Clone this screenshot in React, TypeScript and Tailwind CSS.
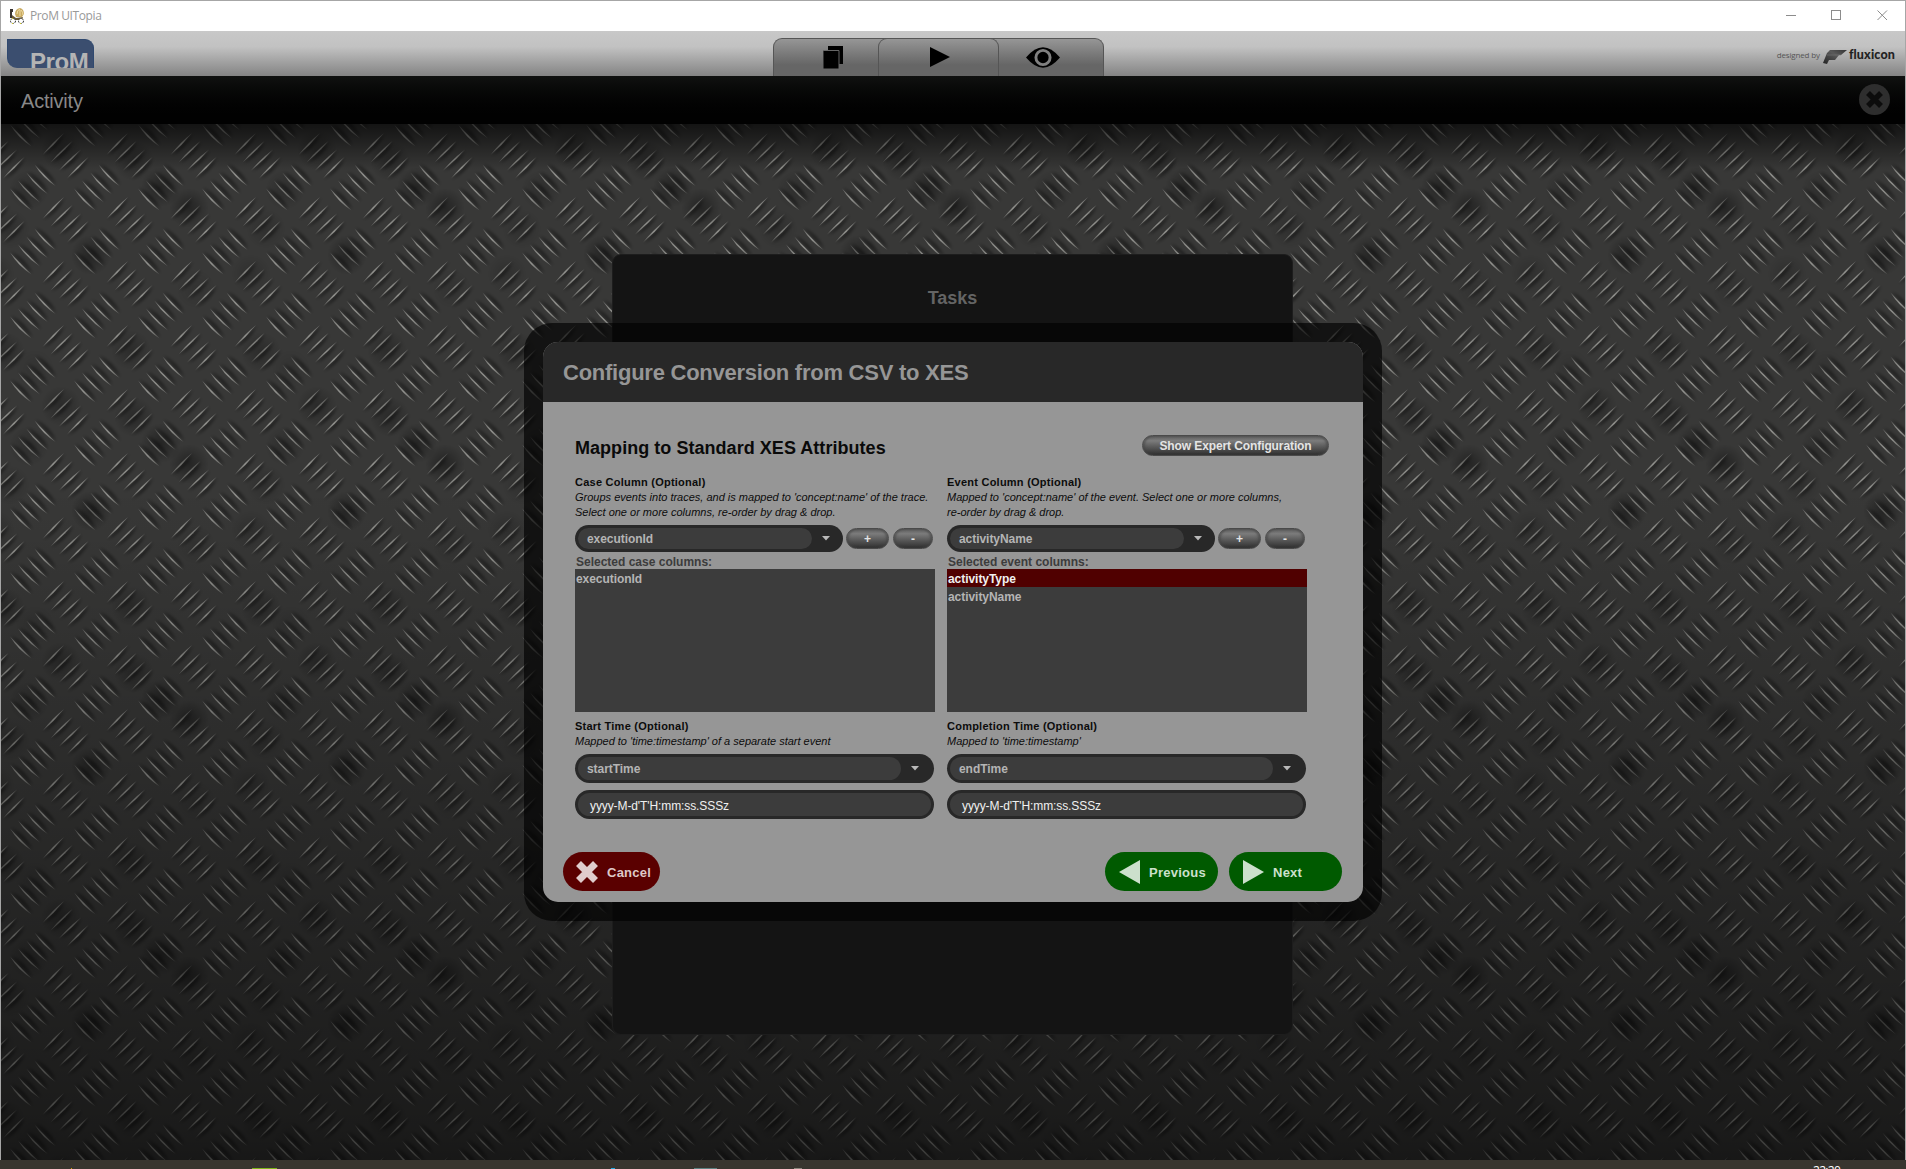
import React from "react";

const FONT = "font-['Liberation_Sans',Arial,sans-serif]";

/* Raised strokes of the tread plate, one 64px cell. */
const SLASHES = [
  [41.5, 31, 63, 9],
  [49.5, 38.5, 71.5, 17],
  [58, 46.5, 80, 25.5],
  [66, 54.5, 87.5, 33],
];
const BACKSLASHES = [
  [9, 64.5, 30.5, 86.5],
  [17, 56.5, 39, 78.5],
  [25.3, 48.5, 46.7, 70],
  [33.5, 40.5, 54.5, 62],
];
const OFFSETS = [-64, 0];
const OFFSETS_Y = [-64, 0, 64];

const GRIME = [
  [60, 26, 0.24], [133, 37, 0.25], [160, 63, 0.34], [188, 84, 0.34], [90, 131, 0.34], [9, 105, 0.15],
  [130, 226, 0.22], [28, 66, 0.18], [4, 228, 0.22], [34, 245, 0.1], [250, 150, 0.15], [195, 165, 0.1],
];
const WRAP = [-256, 0, 256];

function lens(x1: number, y1: number, x2: number, y2: number, bulge: number, inner: number) {
  const mx = (x1 + x2) / 2;
  const my = (y1 + y2) / 2;
  const sx = y2 > y1 ? -1 : 1;
  return `M${x1} ${y1}Q${mx + sx * bulge} ${my + bulge} ${x2} ${y2}Q${mx + sx * inner} ${my + inner} ${x1} ${y1}Z`;
}

function TreadPlate() {
  return (
    <svg className="absolute inset-0 h-full w-full" aria-hidden="true">
      <defs>
        <filter id="soft" x="-50%" y="-50%" width="200%" height="200%">
          <feGaussianBlur stdDeviation="1.8" />
        </filter>
        <radialGradient id="grime">
          <stop offset="0" stopColor="#000" />
          <stop offset="0.4" stopColor="#000" stopOpacity="0.65" />
          <stop offset="1" stopColor="#000" stopOpacity="0" />
        </radialGradient>
        <linearGradient id="edge" x1="0" y1="0" x2="0" y2="1">
          <stop offset="0" stopColor="#8a8a87" stopOpacity="0.65" />
          <stop offset="0.5" stopColor="#90908c" />
          <stop offset="1" stopColor="#777774" stopOpacity="0.7" />
        </linearGradient>
        <pattern id="cell" width="64" height="64" patternUnits="userSpaceOnUse">
          {OFFSETS.map((ox) =>
            OFFSETS_Y.map((oy) => (
              <g key={`${ox}:${oy}`} transform={`translate(${ox} ${oy})`}>
                {SLASHES.map(([a, b, c, d]) => (
                  <g key={a}>
                    <path d={lens(a + 1, b + 1, c + 1, d + 1, 3.5, -0.5)} fill="#0a0a0a" fillOpacity="0.48" filter="url(#soft)" />
                    <path d={lens(a, b, c, d, 1.1, -1.3)} fill="url(#edge)" />
                  </g>
                ))}
                {BACKSLASHES.map(([a, b, c, d]) => (
                  <g key={a}>
                    <path d={lens(a + 1, b - 1, c + 1, d - 1, -4, 0.5)} fill="#0a0a0a" fillOpacity="0.45" filter="url(#soft)" />
                    <path d={lens(a, b, c, d, 2.5, 0.2)} fill="url(#edge)" />
                  </g>
                ))}
              </g>
            )),
          )}
        </pattern>
        <pattern id="dirt" width="256" height="256" patternUnits="userSpaceOnUse">
          {WRAP.map((ox) =>
            WRAP.map((oy) =>
              GRIME.map(([x, y, o]) => (
                <circle key={`${ox}:${oy}:${x}`} cx={x + ox} cy={y + oy} r="20" fill="url(#grime)" opacity={o} />
              )),
            ),
          )}
        </pattern>
        <linearGradient id="light" x1="0" y1="0" x2="0" y2="1">
          <stop offset="0" stopColor="#000" stopOpacity="0.65" />
          <stop offset="0.045" stopColor="#000" stopOpacity="0" />
          <stop offset="0.35" stopColor="#000" stopOpacity="0" />
          <stop offset="0.97" stopColor="#000" stopOpacity="0.52" />
          <stop offset="1" stopColor="#000" stopOpacity="0.58" />
        </linearGradient>
      </defs>
      <rect width="100%" height="100%" fill="#383837" />
      <rect width="100%" height="100%" fill="url(#cell)" />
      <rect width="100%" height="100%" fill="url(#dirt)" />
      <rect width="100%" height="100%" fill="url(#light)" />
    </svg>
  );
}

function AppIcon() {
  return (
    <svg width="16" height="17" viewBox="0 0 16 17">
      <path d="M1 1h3v3h-1v6h-2z" fill="#3a3430" />
      <path d="M3 7l4 3 7-1-1 3H3z" fill="#6b5a35" />
      <path d="M6 6q0-5 5-6 4 1 4 6l-2 3H7z" fill="#c9ab62" />
      <path d="M8 6q0-4 3-5M11 8V2M14 7q0-3-2-5" stroke="#f0dca4" fill="none" />
      <circle cx="4" cy="13" r="2.5" fill="#fff" stroke="#333" strokeDasharray="2 1" />
      <circle cx="12" cy="13" r="2.5" fill="#fff" stroke="#333" strokeDasharray="2 1" />
      <path d="M3 10h1v1H3zM11 15h1v1h-1zM3 15h1v1H3z" fill="#d8d020" />
    </svg>
  );
}

function TitleBar() {
  return (
    <div className="flex h-[30px] shrink-0 items-center bg-white pl-2 pr-[17px]">
      <AppIcon />
      <span className="ml-[5px] font-['Open_Sans',sans-serif] text-[12px] tracking-[-0.4px] text-[#999]">ProM UITopia</span>
      <svg className="-mt-[3px] ml-auto" width="102" height="12" viewBox="0 0 102 12" fill="none" stroke="#8c8c8c" shapeRendering="crispEdges">
        <path d="M0 6.500h10" />
        <path d="M45.500 1.500h9v9h-9z" />
        <path d="M91.500 1.500l9.500 9.500M101 1.500l-9.500 9.500" shapeRendering="auto" />
      </svg>
    </div>
  );
}

function Tabs() {
  const base = "flex h-[38px] items-start justify-center border-[#555] bg-gradient-to-b from-[#969696] to-[#666] to-70%";
  return (
    <div className="ml-[679px] mt-[7px] flex">
      <div className={`${base} w-[115px] rounded-tl-[9px] border-l border-t pl-[4px] pt-[7px]`}>
        <svg width="21" height="24" viewBox="0 0 21 24">
          <path d="M5 0h15v18H5z" fill="#000" />
          <path d="M0 4.500h16V23H0z" fill="#000" stroke="#666" />
        </svg>
      </div>
      <div className={`${base} z-10 -ml-[10px] w-[121px] rounded-t-[9px] border-x border-t pl-[2px] pt-[8px]`}>
        <svg width="20" height="20" viewBox="0 0 20 20">
          <path d="M0 0L20 10L0 20Z" fill="#000" />
        </svg>
      </div>
      <div className={`${base} -ml-[10px] w-[115px] rounded-tr-[9px] border-r border-t pr-[6px] pt-[8px]`}>
        <svg width="34" height="21" viewBox="0 0 35 21">
          <path d="M0 10.500Q9 0 17.500 0T35 10.500Q26 21 17.500 21T0 10.500Z" fill="#000" />
          <circle cx="17.500" cy="10.500" r="7.300" fill="#000" stroke="#808080" strokeWidth="3" />
        </svg>
      </div>
    </div>
  );
}

function Fluxicon() {
  return (
    <div className="ml-auto mr-[10px] mt-[16px] flex h-[16px] items-center">
      <span className="font-['Open_Sans',sans-serif] text-[8px] leading-none tracking-[-0.15px] text-[#555]">designed by</span>
      <svg className="ml-[3px] mt-[3px]" width="25" height="16" viewBox="0 0 25 16">
        <defs>
          <linearGradient id="wing" x1="0" y1="1" x2="1" y2="0">
            <stop offset="0" stopColor="#222" />
            <stop offset="0.6" stopColor="#5a5a5a" />
            <stop offset="1" stopColor="#333" />
          </linearGradient>
        </defs>
        <path d="M7 1H24L18 6H16L12 11H6L4 15L0 14L4 4Z" fill="url(#wing)" />
        <path d="M4 6H18" stroke="#777" strokeWidth="0.600" />
      </svg>
      <span className="ml-px font-['Lato',sans-serif] text-[12.500px] font-black leading-none tracking-[0.15px] text-[#222]">fluxicon</span>
    </div>
  );
}

function Header() {
  return (
    <div className="flex h-[45px] shrink-0 items-start bg-gradient-to-b from-[#c8c8c8] via-[#c2c2c2] via-35% to-[#848484]">
      <div className="ml-[6px] mt-[8px] h-[29px] w-[87px] overflow-hidden rounded-bl-[10px] rounded-tr-[9px] border border-b-0 border-[#30496f] bg-[#3b4e6f] pl-[22px] pt-[8px]">
        <span className="block text-[24px] font-bold leading-[28px] tracking-[-0.4px] text-[#b4b4b4]">ProM</span>
      </div>
      <Tabs />
      <Fluxicon />
    </div>
  );
}

function ActivityBar() {
  return (
    <div className="flex h-[48px] shrink-0 items-center justify-between bg-gradient-to-b from-[#101110] to-[#010101] to-80% pl-[20px] pr-[15px]">
      <span className="mt-[2px] text-[20px] tracking-[-0.2px] text-[#888]">Activity</span>
      <svg width="31" height="31" viewBox="0 0 31 31" className="-mt-px">
        <circle cx="15.500" cy="15.500" r="15.500" fill="#2e2e2e" />
        <path d="M9 9L22 22M22 9L9 22" stroke="#0c0c0c" strokeWidth="5.500" />
      </svg>
    </div>
  );
}

function Pill({ children, className }: { children: React.ReactNode; className: string }) {
  return (
    <button
      className={`flex h-[21px] items-center justify-center whitespace-nowrap rounded-full border border-[#4a4a4a] bg-gradient-to-b from-[#5c5c5c] via-[#7c7c7c] via-25% to-[#303030] text-[12px] font-bold leading-none tracking-[-0.1px] text-[#e4e4e4] shadow-[inset_2px_0_2px_#4448,inset_-2px_0_2px_#4448] ${className}`}
    >
      {children}
    </button>
  );
}

function Combo({ value, className, arrow }: { value: string; className: string; arrow: string }) {
  return (
    <div className={`flex items-center rounded-full bg-[#282828] p-[3px] ${className}`}>
      <div className="flex h-full flex-1 items-center rounded-full bg-[#3c3c3c] pl-[9px] text-[12px] font-bold tracking-[-0.05px] text-[#b4b4b4]">{value}</div>
      <svg className={arrow} width="8" height="5" viewBox="0 0 8 5">
        <path d="M0 0h8L4 4.500z" fill="#b9b9b9" />
      </svg>
    </div>
  );
}

function Caption({ title, lines }: { title: string; lines: string[] }) {
  return (
    <div className="text-[11px] leading-[15px] text-[#0c0c0c]">
      <div className="font-bold tracking-[0.24px]">{title}</div>
      {lines.map((l) => (
        <div key={l} className="whitespace-nowrap italic">{l}</div>
      ))}
    </div>
  );
}

interface ColumnProps {
  title: string;
  lines: string[];
  value: string;
  label: string;
  items: string[];
  selected?: string;
  timeTitle: string;
  timeLine: string;
  timeValue: string;
}

function Column(p: ColumnProps) {
  return (
    <div className="flex w-[360px] flex-col">
      <Caption title={p.title} lines={p.lines} />
      <div className="mt-[5px] flex items-center">
        <Combo value={p.value} className="h-[27px] w-[268px]" arrow="ml-[10px] mr-[10px]" />
        <Pill className="ml-[3px] w-[43px]">+</Pill>
        <Pill className="ml-[4px] w-[40px]">-</Pill>
      </div>
      <div className="h-[17px] pl-px pt-px text-[12px] font-bold leading-[19px] text-[#3c3c3c]">{p.label}</div>
      <ul className="h-[143px] bg-[#3c3c3c] text-[12px] font-bold leading-[20px] tracking-[-0.05px]">
        {p.items.map((it) => (
          <li key={it} className={it === p.selected ? "h-[18px] bg-[#500000] pl-px text-[#f0f0f0]" : "h-[18px] pl-px text-[#b4b4b4]"}>
            {it}
          </li>
        ))}
      </ul>
      <div className="mt-[7px]">
        <Caption title={p.timeTitle} lines={[p.timeLine]} />
      </div>
      <Combo value={p.timeValue} className="mt-[5px] h-[29px] w-[359px]" arrow="ml-[10px] mr-[12px]" />
      <div className="mt-[7px] flex h-[29px] w-[359px] items-center rounded-full border-[3px] border-[#282828] bg-[#3c3c3c] pl-[12px] pt-[2px] text-[12px] tracking-[-0.1px] text-[#f0f0f0]">
        yyyy-M-d'T'H:mm:ss.SSSz
      </div>
    </div>
  );
}

function Dialog() {
  return (
    <div className="absolute left-[523px] top-[199px] h-[598px] w-[858px] rounded-[28px] bg-black/65 p-[19px]">
      <div className="flex h-[560px] w-[820px] flex-col overflow-hidden rounded-[15px] bg-[#969696]">
        <div className="flex h-[60px] shrink-0 items-center bg-[#282828] pl-[20px] text-[22px] font-bold tracking-[-0.25px] text-[#969696]">
          Configure Conversion from CSV to XES
        </div>
        <div className="flex items-start justify-between pl-[32px] pr-[34px] pt-[33px]">
          <h2 className="text-[18px] font-bold leading-[26px] tracking-[0.04px] text-[#0a0a0a]">Mapping to Standard XES Attributes</h2>
          <Pill className="w-[187px]">Show Expert Configuration</Pill>
        </div>
        <div className="mt-[14px] flex gap-[12px] pl-[32px]">
          <Column
            title="Case Column (Optional)"
            lines={["Groups events into traces, and is mapped to 'concept:name' of the trace.", "Select one or more columns, re-order by drag & drop."]}
            value="executionId"
            label="Selected case columns:"
            items={["executionId"]}
            timeTitle="Start Time (Optional)"
            timeLine="Mapped to 'time:timestamp' of a separate start event"
            timeValue="startTime"
          />
          <Column
            title="Event Column (Optional)"
            lines={["Mapped to 'concept:name' of the event. Select one or more columns,", "re-order by drag & drop."]}
            value="activityName"
            label="Selected event columns:"
            items={["activityType", "activityName"]}
            selected="activityType"
            timeTitle="Completion Time (Optional)"
            timeLine="Mapped to 'time:timestamp'"
            timeValue="endTime"
          />
        </div>
        <div className="mt-[33px] flex h-[39px] items-stretch pl-[20px] pr-[21px] text-[13px] font-bold tracking-[0.25px]">
          <button className="flex w-[97px] items-center rounded-full bg-[#5a0000] pl-[13px] text-[#dfc8c8]">
            <svg width="22" height="22" viewBox="0 0 22 22">
              <path d="M2.500 2.500L19.500 19.500M19.500 2.500L2.500 19.500" stroke="#e0cccc" strokeWidth="7" />
            </svg>
            <span className="ml-[9px] mt-[2px]">Cancel</span>
          </button>
          <button className="ml-auto flex w-[113px] items-center rounded-full bg-[#005a00] pl-[14px] text-[#cce0cc]">
            <svg width="21" height="24" viewBox="0 0 21 24">
              <path d="M21 0V24L0 12Z" fill="#cce0cc" />
            </svg>
            <span className="ml-[9px] mt-[2px]">Previous</span>
          </button>
          <button className="ml-[11px] flex w-[113px] items-center rounded-full bg-[#005a00] pl-[14px] text-[#cce0cc]">
            <svg width="21" height="24" viewBox="0 0 21 24">
              <path d="M0 0V24L21 12Z" fill="#cce0cc" />
            </svg>
            <span className="ml-[9px] mt-[2px]">Next</span>
          </button>
        </div>
      </div>
    </div>
  );
}

function Taskbar() {
  return (
    <div className="relative flex h-[9px] shrink-0 items-end overflow-hidden bg-[#38352f]">
      <div className="ml-[71px] h-px w-[1px] bg-[#c90]" />
      <div className="ml-[180px] h-px w-[25px] bg-[#7cb518]" />
      <div className="ml-[334px] h-px w-[4px] bg-[#1fa8e0]" />
      <div className="ml-[79px] h-px w-[23px] bg-[#5c8080]" />
      <div className="ml-[77px] h-px w-[8px] bg-[#8a857c]" />
      <span className="absolute left-[1813px] top-[3px] font-['Open_Sans',sans-serif] text-[12px] leading-[16px] tracking-[-0.7px] text-white">22:20</span>
    </div>
  );
}

export default function App() {
  return (
    <div className={`flex h-[1169px] w-[1906px] flex-col overflow-hidden bg-[#111] ${FONT}`}>
      <div className="flex h-[1160px] flex-col border-x border-t border-[#a6a6a6]">
        <TitleBar />
        <Header />
        <ActivityBar />
        <main className="relative flex-1 overflow-hidden">
          <TreadPlate />
          <section className="relative ml-[611px] mt-[130px] flex h-[781px] w-[681px] justify-center rounded-[9px] border border-[#1d1d1d] bg-[#141414] pt-[32px]">
            <h1 className="text-[18px] font-bold leading-[22px] text-[#646464]">Tasks</h1>
          </section>
          <Dialog />
        </main>
      </div>
      <Taskbar />
    </div>
  );
}
